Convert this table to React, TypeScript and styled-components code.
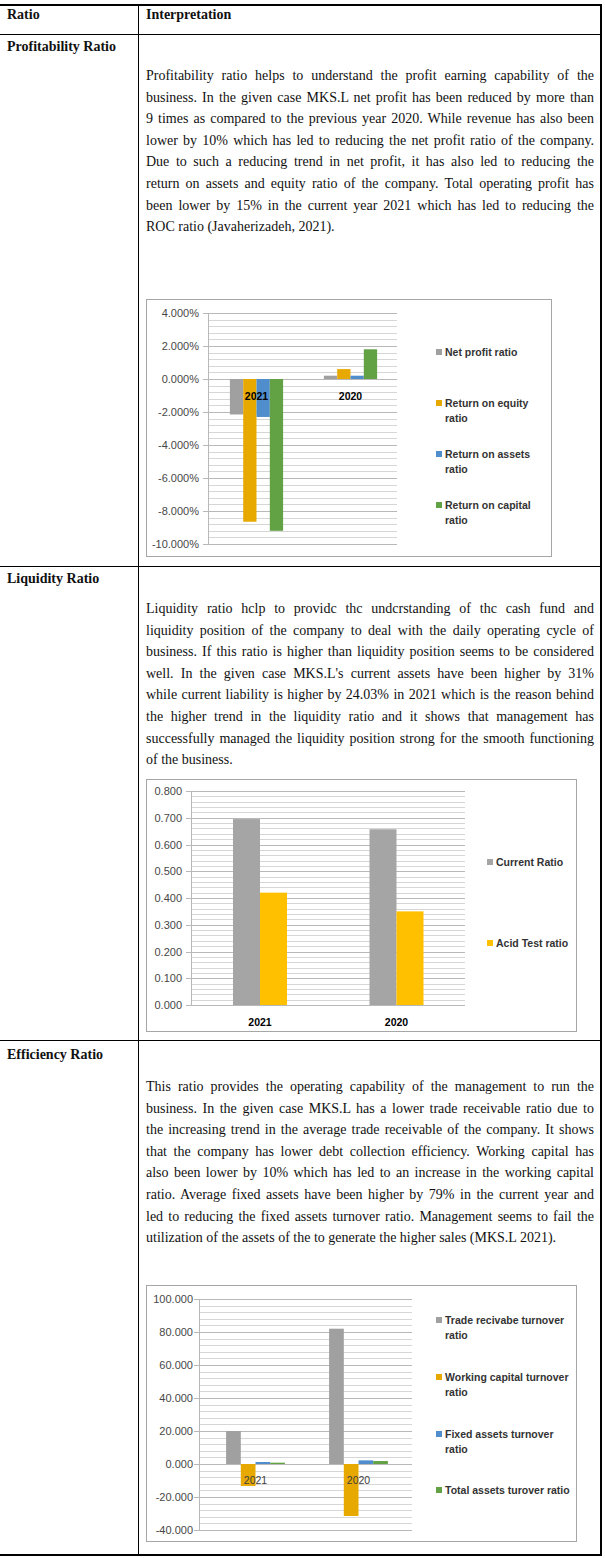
import React from "react";
import styled, { createGlobalStyle } from "styled-components";

const Global = createGlobalStyle`
  html, body { margin: 0; padding: 0; background: #fff; }
  body { font-family: "Liberation Serif", "Times New Roman", serif; color: #111; }
`;

const Page = styled.div`
  padding-top: 4px;
  width: 605px;
`;

const Table = styled.div`
  width: 602px;
  border-top: 2px solid #000;
  border-right: 2px solid #000;
  border-bottom: 2px solid #000;
  box-sizing: border-box;
`;

const Row = styled.div<{ $h: number; $last?: boolean }>`
  display: grid;
  grid-template-columns: 139px 1fr;
  height: ${(p) => p.$h}px;
  border-bottom: ${(p) => (p.$last ? "none" : "1px solid #000")};
`;

const LabelCell = styled.div<{ $pt: number }>`
  border-right: 1px solid #000;
  padding: ${(p) => p.$pt}px 0 0 7px;
  font-weight: bold;
  font-size: 14px;
  line-height: ${(p) => (p.$pt === 0 ? "18px" : "21.6px")};
`;

const ContentCell = styled.div<{ $pt: number }>`
  padding: ${(p) => p.$pt}px 6px 0 7px;
  font-size: 14px;
  line-height: 21.6px;
`;

const HeadText = styled.div`
  font-weight: bold;
  line-height: 18px;
`;

const Paragraph = styled.div`
  width: 448px;
`;

const Line = styled.div<{ $last?: boolean }>`
  text-align: ${(p) => (p.$last ? "left" : "justify")};
  text-align-last: ${(p) => (p.$last ? "left" : "justify")};
  white-space: nowrap;
`;

const ChartBox = styled.div<{ $mt: number }>`
  margin-top: ${(p) => p.$mt}px;
`;

const ChartFrame = styled.svg`
  display: block;
  border: 1px solid #a6a6a6;
  background: #fff;
  font-family: "Liberation Sans", Arial, sans-serif;
`;

type Group = { label: string; center: number; values: number[] };
type LegendItem = { color: string; lines: string[]; y: number };
type Spec = {
  w: number;
  h: number;
  plotLeft: number;
  plotRight: number;
  zeroY: number;
  scale: number;
  min: number;
  max: number;
  major: number;
  minor: number;
  suffix: string;
  labelRight: number;
  barWidth: number;
  colors: string[];
  groups: Group[];
  catY: number;
  catBold: boolean;
  legendX: number;
  legend: LegendItem[];
};

function BarChart({ spec }: { spec: Spec }) {
  const iw = spec.w - 2;
  const ih = spec.h - 2;
  const yOf = (v: number) => spec.zeroY - v * spec.scale;
  const n = Math.round((spec.max - spec.min) / spec.minor);
  const per = Math.round(spec.major / spec.minor);
  const grid: React.ReactNode[] = [];
  for (let i = 0; i <= n; i++) {
    const v = spec.min + i * spec.minor;
    const y = Math.round(yOf(v)) + 0.5;
    const isMajor = i % per === 0;
    grid.push(
      <line
        key={"g" + i}
        x1={isMajor ? spec.plotLeft - 5 : spec.plotLeft}
        x2={spec.plotRight}
        y1={y}
        y2={y}
        stroke={isMajor ? "#b8b8b8" : "#d6d6d6"}
        strokeWidth={1}
      />
    );
    if (isMajor) {
      grid.push(
        <text
          key={"t" + i}
          x={spec.labelRight}
          y={yOf(v) + 4}
          textAnchor="end"
          fontSize={11}
          fill="#474747"
        >
          {v.toFixed(3) + spec.suffix}
        </text>
      );
    }
  }
  const bars: React.ReactNode[] = [];
  spec.groups.forEach((g, gi) => {
    const total = g.values.length * spec.barWidth;
    g.values.forEach((v, vi) => {
      const x = g.center - total / 2 + vi * spec.barWidth;
      const y0 = yOf(0);
      const y1 = yOf(v);
      bars.push(
        <rect
          key={`b${gi}-${vi}`}
          x={x}
          y={Math.min(y0, y1)}
          width={spec.barWidth}
          height={Math.abs(y1 - y0)}
          fill={spec.colors[vi]}
        />
      );
    });
  });
  return (
    <ChartFrame width={iw} height={ih} viewBox={`1 1 ${iw} ${ih}`}>
      {grid}
      <line
        x1={spec.plotLeft + 0.5}
        x2={spec.plotLeft + 0.5}
        y1={yOf(spec.max)}
        y2={yOf(spec.min)}
        stroke="#b8b8b8"
      />
      {bars}
      {spec.groups.map((g) => (
        <text
          key={g.label}
          x={g.center}
          y={spec.catY + 4}
          textAnchor="middle"
          fontSize={10.5}
          fontWeight={spec.catBold ? "bold" : "normal"}
          fill={spec.catBold ? "#000" : "#404040"}
        >
          {g.label}
        </text>
      ))}
      {spec.legend.map((l) => (
        <g key={l.lines[0]}>
          <rect x={spec.legendX} y={l.y - 3} width={6} height={6} fill={l.color} />
          {l.lines.map((t, i) => (
            <text
              key={t}
              x={spec.legendX + 9}
              y={l.y + 4 + i * 14.5}
              fontSize={10.5}
              fontWeight="bold"
              fill="#333"
            >
              {t}
            </text>
          ))}
        </g>
      ))}
    </ChartFrame>
  );
}

const GRAY = "#a0a0a0";
const GOLD = "#e7a900";
const BLUE = "#4f8dcc";
const GREEN = "#62a244";

const chart1: Spec = {
  w: 406,
  h: 258,
  plotLeft: 62,
  plotRight: 251,
  zeroY: 80,
  scale: 16.5,
  min: -10,
  max: 4,
  major: 2,
  minor: 0.4,
  suffix: "%",
  labelRight: 53,
  barWidth: 13.3,
  colors: [GRAY, GOLD, BLUE, GREEN],
  groups: [
    { label: "2021", center: 110.5, values: [-2.15, -8.65, -2.3, -9.2] },
    { label: "2020", center: 204.5, values: [0.2, 0.6, 0.2, 1.8] },
  ],
  catY: 97,
  catBold: true,
  legendX: 290,
  legend: [
    { color: GRAY, lines: ["Net profit ratio"], y: 53 },
    { color: GOLD, lines: ["Return on equity", "ratio"], y: 104 },
    { color: BLUE, lines: ["Return on assets", "ratio"], y: 155 },
    { color: GREEN, lines: ["Return on capital", "ratio"], y: 206 },
  ],
};

const chart2: Spec = {
  w: 431,
  h: 253,
  plotLeft: 45,
  plotRight: 319,
  zeroY: 226,
  scale: 267.5,
  min: 0,
  max: 0.8,
  major: 0.1,
  minor: 0.02,
  suffix: "",
  labelRight: 36,
  barWidth: 27,
  colors: ["#a5a5a5", "#ffc000"],
  groups: [
    { label: "2021", center: 114, values: [0.695, 0.42] },
    { label: "2020", center: 250.5, values: [0.657, 0.35] },
  ],
  catY: 243,
  catBold: true,
  legendX: 341,
  legend: [
    { color: "#a5a5a5", lines: ["Current Ratio"], y: 83 },
    { color: "#ffc000", lines: ["Acid Test ratio"], y: 164 },
  ],
};

const chart3: Spec = {
  w: 431,
  h: 257,
  plotLeft: 53,
  plotRight: 266,
  zeroY: 179,
  scale: 1.65,
  min: -40,
  max: 100,
  major: 20,
  minor: 4,
  suffix: "",
  labelRight: 47,
  barWidth: 14.7,
  colors: [GRAY, GOLD, BLUE, GREEN],
  groups: [
    { label: "2021", center: 109.5, values: [20, -13.3, 1.2, 0.8] },
    { label: "2020", center: 212.5, values: [82, -31.5, 2.2, 1.8] },
  ],
  catY: 195,
  catBold: false,
  legendX: 290,
  legend: [
    { color: GRAY, lines: ["Trade recivabe turnover", "ratio"], y: 35 },
    { color: GOLD, lines: ["Working capital turnover", "ratio"], y: 92 },
    { color: BLUE, lines: ["Fixed assets turnover", "ratio"], y: 149 },
    { color: GREEN, lines: ["Total assets turover ratio"], y: 205 },
  ],
};

const para1 = [
  "Profitability ratio helps to understand the profit earning capability of the",
  "business. In the given case MKS.L net profit has been reduced by more than",
  "9 times as compared to the previous year 2020. While revenue has also been",
  "lower by 10% which has led to reducing the net profit ratio of the company.",
  "Due to such a reducing trend in net profit, it has also led to reducing the",
  "return on assets and equity ratio of the company. Total operating profit has",
  "been lower by 15% in the current year 2021 which has led to reducing the",
  "ROC ratio (Javaherizadeh, 2021).",
];

const para2 = [
  "Liquidity ratio hclp to providc thc undcrstanding of thc cash fund and",
  "liquidity position of the company to deal with the daily operating cycle of",
  "business. If this ratio is higher than liquidity position seems to be considered",
  "well. In the given case MKS.L's current assets have been higher by 31%",
  "while current liability is higher by 24.03% in 2021 which is the reason behind",
  "the higher trend in the liquidity ratio and it shows that management has",
  "successfully managed the liquidity position strong for the smooth functioning",
  "of the business.",
];

const para3 = [
  "This ratio provides the operating capability of the management to run the",
  "business. In the given case MKS.L has a lower trade receivable ratio due to",
  "the increasing trend in the average trade receivable of the company. It shows",
  "that the company has lower debt collection efficiency. Working capital has",
  "also been lower by 10% which has led to an increase in the working capital",
  "ratio. Average fixed assets have been higher by 79% in the current year and",
  "led to reducing the fixed assets turnover ratio. Management seems to fail the",
  "utilization of the assets of the to generate the higher sales (MKS.L 2021).",
];

type Section = {
  label: string;
  height: number;
  labelPad: number;
  textPad: number;
  lines: string[];
  chartGap: number;
  spec: Spec;
};

const sections: Section[] = [
  { label: "Profitability Ratio", height: 531, labelPad: 1, textPad: 30, lines: para1, chartGap: 61, spec: chart1 },
  { label: "Liquidity Ratio", height: 473, labelPad: 1, textPad: 31, lines: para2, chartGap: 8, spec: chart2 },
  { label: "Efficiency Ratio", height: 513, labelPad: 3, textPad: 35, lines: para3, chartGap: 36, spec: chart3 },
];

export default function App() {
  return (
    <Page>
      <Global />
      <Table>
        <Row $h={28}>
          <LabelCell $pt={0}>Ratio</LabelCell>
          <ContentCell $pt={0}>
            <HeadText>Interpretation</HeadText>
          </ContentCell>
        </Row>
        {sections.map((s, i) => (
          <Row key={s.label} $h={s.height} $last={i === sections.length - 1}>
            <LabelCell $pt={s.labelPad}>{s.label}</LabelCell>
            <ContentCell $pt={s.textPad}>
              <Paragraph>
                {s.lines.map((l, li) => (
                  <Line key={li} $last={li === s.lines.length - 1}>
                    {l}
                  </Line>
                ))}
              </Paragraph>
              <ChartBox $mt={s.chartGap}>
                <BarChart spec={s.spec} />
              </ChartBox>
            </ContentCell>
          </Row>
        ))}
      </Table>
    </Page>
  );
}
